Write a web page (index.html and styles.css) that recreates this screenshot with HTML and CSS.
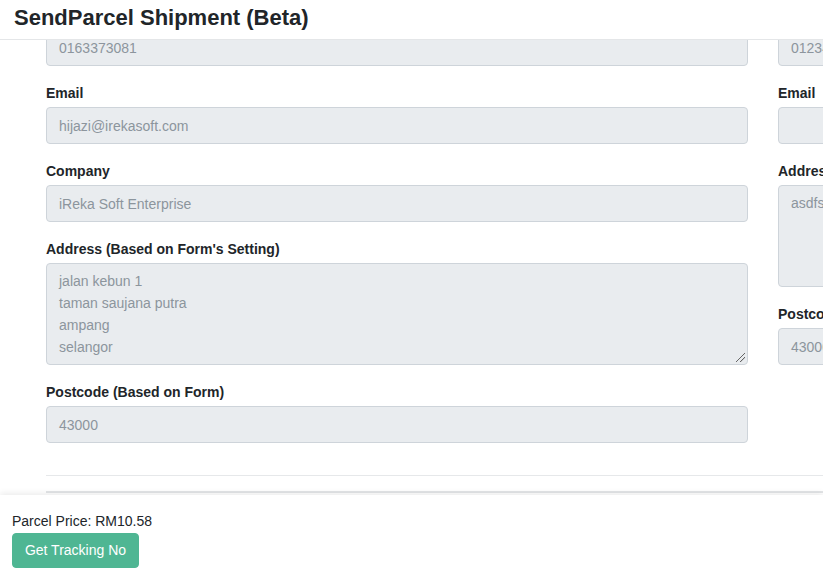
FILE: index.html
```html
<!DOCTYPE html>
<html>
<head>
<meta charset="utf-8">
<link rel="stylesheet" href="styles.css">
</head>
<body>
<header class="topbar">
  <h1 class="title">SendParcel Shipment (Beta)</h1>
</header>
<main class="scroller">
  <div class="content">
    <div class="columns">
      <section class="col">
        <div class="group">
          <div class="field">0163373081</div>
        </div>
        <div class="group">
          <label class="lbl">Email</label>
          <div class="field">hijazi@irekasoft.com</div>
        </div>
        <div class="group">
          <label class="lbl">Company</label>
          <div class="field">iReka Soft Enterprise</div>
        </div>
        <div class="group">
          <label class="lbl">Address (Based on Form's Setting)</label>
          <div class="field area">jalan kebun 1<br>taman saujana putra<br>ampang<br>selangor<span class="grip"></span></div>
        </div>
        <div class="group">
          <label class="lbl">Postcode (Based on Form)</label>
          <div class="field">43000</div>
        </div>
      </section>
      <section class="col">
        <div class="group">
          <div class="field">0123456789</div>
        </div>
        <div class="group">
          <label class="lbl">Email</label>
          <div class="field"></div>
        </div>
        <div class="group">
          <label class="lbl">Address</label>
          <div class="field area">asdfsadf</div>
        </div>
        <div class="group">
          <label class="lbl">Postcode</label>
          <div class="field">43000</div>
        </div>
      </section>
    </div>
    <hr class="rule">
    <hr class="rule rule2">
  </div>
</main>
<footer class="footer">
  <div class="price">Parcel Price: RM10.58</div>
  <button class="btn">Get Tracking No</button>
</footer>
</body>
</html>
```
FILE: styles.css
```css
* { box-sizing: border-box; }
html, body { margin: 0; padding: 0; }
body {
  width: 823px;
  height: 573px;
  overflow: hidden;
  font-family: "Liberation Sans", Arial, sans-serif;
  color: #212529;
  background: #fff;
  display: flex;
  flex-direction: column;
}
.topbar {
  height: 40px;
  flex: none;
  border-bottom: 1px solid #e4e6e8;
  padding: 0 14px;
  display: flex;
  align-items: center;
  background: #fff;
}
.title {
  margin: 0;
  font-size: 22px;
  font-weight: bold;
  line-height: 1;
  position: relative;
  top: -2px;
}
.scroller {
  flex: 1;
  overflow: hidden;
}
.content {
  margin-top: -11px;
  padding-left: 46px;
}
.columns {
  display: grid;
  grid-template-columns: 702px 702px;
  column-gap: 30px;
}
.group { margin-bottom: 19px; }
.lbl {
  display: block;
  font-size: 14px;
  font-weight: bold;
  line-height: 17px;
  margin-bottom: 5px;
}
.field {
  height: 37px;
  background: #e9ecef;
  border: 1px solid #ced4da;
  border-radius: 4px;
  padding: 1px 12px 0;
  font-size: 14px;
  line-height: 35px;
  color: #8c959d;
  position: relative;
  white-space: nowrap;
  overflow: hidden;
}
.area {
  height: 102px;
  line-height: 22px;
  padding-top: 6px;
}
.grip {
  position: absolute;
  right: 2px;
  bottom: 2px;
  width: 9px;
  height: 9px;
  background: linear-gradient(135deg, transparent 45%, #666 46%, #666 52%, transparent 53%, transparent 70%, #666 71%, #666 77%, transparent 78%);
}
.rule {
  margin: 13px 0 0;
  border: 0;
  border-top: 1px solid #e6e8ea;
}
.rule2 {
  margin-top: 15px;
  border-top: 2px solid #e3e5e7;
}
.footer {
  flex: none;
  height: 78px;
  background: #fff;
  box-shadow: 0 -2px 6px rgba(0, 0, 0, 0.08);
  padding: 16px 12px 0;
  position: relative;
}
.price {
  font-size: 14px;
  line-height: 20px;
}
.btn {
  margin-top: 2px;
  display: block;
  height: 35px;
  width: 127px;
  background: #4fb693;
  border: 1px solid #4fb693;
  border-radius: 4px;
  color: #fff;
  font-family: "Liberation Sans", Arial, sans-serif;
  font-size: 14px;
  padding: 0 0 1px;
}
```
